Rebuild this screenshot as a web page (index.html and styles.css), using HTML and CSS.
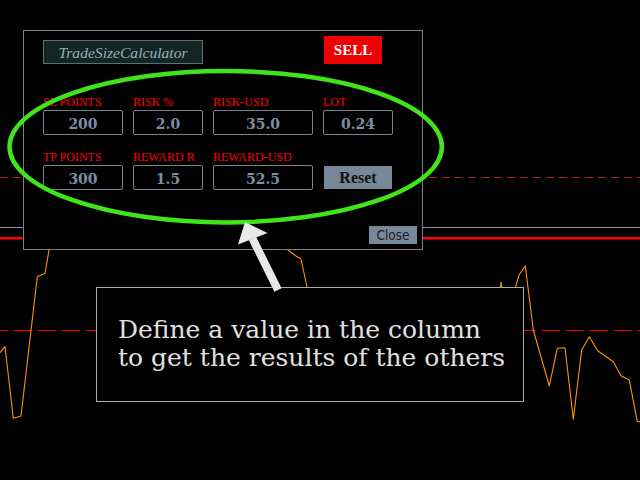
FILE: index.html
```html
<!DOCTYPE html>
<html lang="en">
<head>
<meta charset="utf-8">
<title>TradeSizeCalculator</title>
<link rel="stylesheet" href="styles.css">
</head>
<body>
<svg class="chart" width="640" height="480" viewBox="0 0 640 480" aria-hidden="true">
  <line class="dash-dim" x1="0" y1="177.5" x2="640" y2="177.5"/>
  <line class="grid-line" x1="0" y1="227.5" x2="640" y2="227.5"/>
  <line class="price-line" x1="0" y1="238.3" x2="640" y2="238.3"/>
  <line class="dash-red" x1="0" y1="330.5" x2="640" y2="330.5"/>
  <polyline class="price" points="0,352.7 5,346.7 13.3,418.3 21,416 37.3,276.7 45,273.3 49,250 60,200 280,200 288,250 296,256 301,259 307,287 320,330 499,300 501,282 504,300 512,300 519,275 525.3,266 533.3,330 549.3,386 557.3,348.3 565,347.7 573.3,419.3 581.7,350 589.3,336.7 597.7,350.7 613.3,361.7 621,375.7 629.3,380 637.3,421.7 640,421.7"/>
</svg>

<main class="stage">
  <section class="panel">
    <header class="panel-head">
      <div class="title">TradeSizeCalculator</div>
      <div class="sell">SELL</div>
    </header>
    <div class="fields">
      <div class="field"><span class="label">SL POINTS</span><span class="box">200</span></div>
      <div class="field"><span class="label">RISK %</span><span class="box">2.0</span></div>
      <div class="field"><span class="label">RISK-USD</span><span class="box">35.0</span></div>
      <div class="field"><span class="label">LOT</span><span class="box">0.24</span></div>
      <div class="field"><span class="label">TP POINTS</span><span class="box">300</span></div>
      <div class="field"><span class="label">REWARD R</span><span class="box">1.5</span></div>
      <div class="field"><span class="label">REWARD-USD</span><span class="box">52.5</span></div>
      <div class="field reset-cell"><span class="reset">Reset</span></div>
    </div>
    <div class="close">Close</div>
  </section>

  <div class="note">
    <p>Define a value in the column<br>to get the results of the others</p>
  </div>
</main>

<svg class="overlay" width="640" height="480" viewBox="0 0 640 480" aria-hidden="true">
  <ellipse class="ring" cx="225.7" cy="146.7" rx="216.2" ry="75.7"/>
  <polygon class="arrow" points="248.9,240.3 256.1,236.7 281.6,288.2 274.4,291.8"/>
  <polygon class="arrow" points="245,222 238,244.5 267.5,233"/>
</svg>
</body>
</html>
```
FILE: styles.css
```css
html, body {
  margin: 0;
  padding: 0;
  background: #000;
}

body {
  width: 640px;
  height: 480px;
  overflow: hidden;
  position: relative;
  font-family: "Liberation Serif", serif;
}

.chart {
  position: absolute;
  left: 0;
  top: 0;
  z-index: 0;
}

.chart line,
.chart polyline {
  fill: none;
}

.dash-dim {
  stroke: #b02020;
  stroke-width: 1;
  stroke-dasharray: 8 5;
}

.grid-line {
  stroke: #8794a2;
  stroke-width: 1;
}

.price-line {
  stroke: #ff0000;
  stroke-width: 2.4;
}

.dash-red {
  stroke: #ff0000;
  stroke-width: 1;
  stroke-dasharray: 18 6;
  stroke-dashoffset: 10.3;
}

.price {
  stroke: #ff9400;
  stroke-width: 1.1;
  stroke-linejoin: round;
}

.stage {
  position: relative;
  z-index: 1;
  padding: 30px 0 0 23px;
  display: flex;
  flex-direction: column;
  align-items: flex-start;
}

.panel {
  box-sizing: border-box;
  width: 400px;
  height: 220px;
  border: 1px solid #808080;
  background: #000;
  padding: 5px 0 0 19px;
  display: flex;
  flex-direction: column;
}

.panel-head {
  display: grid;
  grid-template-columns: 80px 70px 100px 70px;
  column-gap: 10px;
  align-items: end;
  height: 28px;
}

.title {
  grid-column: 1 / span 2;
  box-sizing: border-box;
  height: 24px;
  border: 1px solid #4f7575;
  background: #162524;
  color: #8db4b4;
  font-style: italic;
  font-size: 15.6px;
  display: flex;
  align-items: center;
  justify-content: center;
  padding-top: 1px;
}

.sell {
  grid-column: 4;
  margin-left: 1px;
  width: 58px;
  height: 28px;
  background: #ee0000;
  color: #fff;
  font-weight: bold;
  font-size: 15px;
  display: flex;
  align-items: center;
  justify-content: center;
}

.fields {
  margin-top: 31px;
  display: grid;
  grid-template-columns: 80px 70px 100px 70px;
  column-gap: 10px;
  row-gap: 15px;
}

.field {
  display: flex;
  flex-direction: column;
  gap: 1px;
}

.label {
  color: #ff0000;
  font-size: 12px;
  line-height: 14px;
  white-space: nowrap;
}

.box {
  box-sizing: border-box;
  height: 25px;
  border: 1px solid #76858f;
  border-radius: 2px;
  padding-top: 3px;
  line-height: 20px;
  text-align: center;
  color: #7b8ea6;
  font-family: "DejaVu Serif", serif;
  font-weight: bold;
  font-size: 14px;
}

.reset-cell {
  padding-top: 16px;
}

.reset {
  margin-left: 1px;
  width: 68px;
  height: 23px;
  background: #778899;
  color: #111;
  font-weight: bold;
  font-size: 16px;
  display: flex;
  align-items: center;
  justify-content: center;
}

.close {
  margin-top: auto;
  align-self: flex-end;
  margin-right: 5px;
  margin-bottom: 5px;
  width: 48px;
  height: 18px;
  background: #778899;
  color: #1c1c28;
  font-family: "DejaVu Sans Condensed", "Liberation Sans", sans-serif;
  font-stretch: condensed;
  font-size: 13.5px;
  display: flex;
  align-items: center;
  justify-content: center;
}

.note {
  box-sizing: border-box;
  width: 428px;
  height: 115px;
  margin: 37px 0 0 73px;
  border: 1px solid #ababab;
  background: #000;
  padding: 28px 0 0 21px;
}

.note p {
  margin: 0;
  color: #e0e0e0;
  font-family: "DejaVu Serif", serif;
  font-size: 25px;
  line-height: 28px;
  white-space: nowrap;
}

.overlay {
  position: absolute;
  left: 0;
  top: 0;
  z-index: 2;
  pointer-events: none;
}

.ring {
  fill: none;
  stroke: #3fe41a;
  stroke-width: 4.5;
}

.arrow {
  fill: #e8e8e8;
}
```
